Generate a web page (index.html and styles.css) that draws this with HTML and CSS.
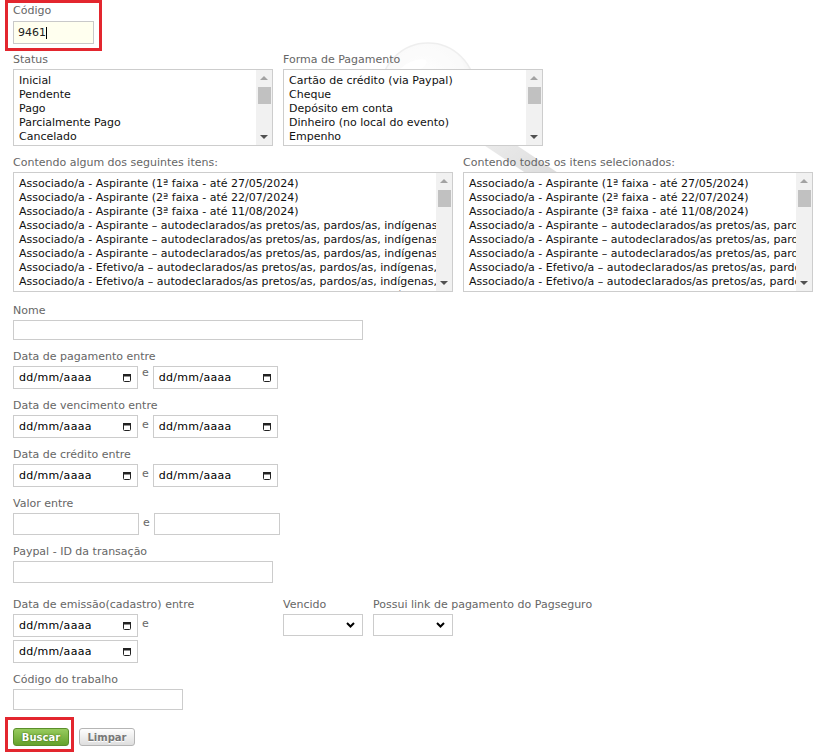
FILE: index.html
```html
<!DOCTYPE html>
<html lang="pt-BR">
<head>
	<meta charset="utf-8">
	<title>Inscrições - filtro</title>
	<link rel="stylesheet" href="styles.css">
</head>
<body>
	<!-- marca d'agua do fundo -->
	<svg class="lens" width="230" height="170" viewBox="0 0 230 170">
		<defs>
			<radialGradient id="glass" cx="45%" cy="40%" r="60%">
				<stop offset="0" stop-color="#ffffff"/>
				<stop offset="0.75" stop-color="#f7f7f7"/>
				<stop offset="1" stop-color="#e6e6e6"/>
			</radialGradient>
			<linearGradient id="cabo" x1="0" y1="0" x2="1" y2="1">
				<stop offset="0" stop-color="#ececec"/>
				<stop offset="1" stop-color="#c4c4c4"/>
			</linearGradient>
		</defs>
		<line x1="85" y1="77" x2="190" y2="147" stroke="url(#cabo)" stroke-width="18" stroke-linecap="round"/>
		<circle cx="58" cy="52" r="47" fill="url(#glass)" stroke="#e4e4e4" stroke-width="1.5"/>
		<ellipse cx="42" cy="30" rx="16" ry="6" fill="#fff" transform="rotate(-25 42 30)"/>
	</svg>

	<form class="filtros">
		<div class="hl hl-cod">
			<label>Código</label>
			<div class="cod-wrap">
				<input class="txt cod" type="text" value="9461">
				<span class="caret"></span>
			</div>
		</div>

		<div class="row row-top">
			<div class="field w260">
				<label>Status</label>
				<div class="list short">
					<div class="opts">
						<div>Inicial</div>
						<div>Pendente</div>
						<div>Pago</div>
						<div>Parcialmente Pago</div>
						<div>Cancelado</div>
						<div>Isento</div>
					</div>
					<div class="sbar"><span class="up"></span><span class="thumb"></span><span class="dn"></span></div>
				</div>
			</div>
			<div class="field w260">
				<label>Forma de Pagamento</label>
				<div class="list short">
					<div class="opts">
						<div>Cartão de crédito (via Paypal)</div>
						<div>Cheque</div>
						<div>Depósito em conta</div>
						<div>Dinheiro (no local do evento)</div>
						<div>Empenho</div>
						<div>Isento/cortesia</div>
					</div>
					<div class="sbar"><span class="up"></span><span class="thumb"></span><span class="dn"></span></div>
				</div>
			</div>
		</div>

		<div class="row row-itens">
			<div class="field w440">
				<label>Contendo algum dos seguintes itens:</label>
				<div class="list tall">
					<div class="opts">
						<div>Associado/a - Aspirante (1ª faixa - até 27/05/2024)</div>
						<div>Associado/a - Aspirante (2ª faixa - até 22/07/2024)</div>
						<div>Associado/a - Aspirante (3ª faixa - até 11/08/2024)</div>
						<div>Associado/a - Aspirante – autodeclarados/as pretos/as, pardos/as, indígenas e quilombolas (1ª faixa)</div>
						<div>Associado/a - Aspirante – autodeclarados/as pretos/as, pardos/as, indígenas e quilombolas (2ª faixa)</div>
						<div>Associado/a - Aspirante – autodeclarados/as pretos/as, pardos/as, indígenas e quilombolas (3ª faixa)</div>
						<div>Associado/a - Efetivo/a – autodeclarados/as pretos/as, pardos/as, indígenas, quilombolas (1ª faixa)</div>
						<div>Associado/a - Efetivo/a – autodeclarados/as pretos/as, pardos/as, indígenas, quilombolas (2ª faixa)</div>
						<div>Associado/a - Efetivo/a – autodeclarados/as pretos/as, pardos/as, indígenas, quilombolas (3ª faixa)</div>
					</div>
					<div class="sbar"><span class="up"></span><span class="thumb"></span><span class="dn"></span></div>
				</div>
			</div>
			<div class="field w350">
				<label>Contendo todos os itens selecionados:</label>
				<div class="list tall">
					<div class="opts">
						<div>Associado/a - Aspirante (1ª faixa - até 27/05/2024)</div>
						<div>Associado/a - Aspirante (2ª faixa - até 22/07/2024)</div>
						<div>Associado/a - Aspirante (3ª faixa - até 11/08/2024)</div>
						<div>Associado/a - Aspirante – autodeclarados/as pretos/as, pardos/as, indígenas e quilombolas (1ª faixa)</div>
						<div>Associado/a - Aspirante – autodeclarados/as pretos/as, pardos/as, indígenas e quilombolas (2ª faixa)</div>
						<div>Associado/a - Aspirante – autodeclarados/as pretos/as, pardos/as, indígenas e quilombolas (3ª faixa)</div>
						<div>Associado/a - Efetivo/a – autodeclarados/as pretos/as, pardos/as, indígenas, quilombolas (1ª faixa)</div>
						<div>Associado/a - Efetivo/a – autodeclarados/as pretos/as, pardos/as, indígenas, quilombolas (2ª faixa)</div>
						<div>Associado/a - Efetivo/a – autodeclarados/as pretos/as, pardos/as, indígenas, quilombolas (3ª faixa)</div>
					</div>
					<div class="sbar"><span class="up"></span><span class="thumb"></span><span class="dn"></span></div>
				</div>
			</div>
		</div>

		<div class="field f-nome">
			<label>Nome</label>
			<input class="txt nome" type="text">
		</div>

		<div class="field">
			<label>Data de pagamento entre</label>
			<div class="pair">
				<div class="date"><span>dd/mm/aaaa</span><svg width="8" height="8" viewBox="0 0 8 8"><rect x="0.5" y="0.5" width="7" height="7" rx="1" fill="none" stroke="#222"/><rect x="0" y="0" width="8" height="2.5" fill="#222"/></svg></div>
				<span class="e e-top">e</span>
				<div class="date"><span>dd/mm/aaaa</span><svg width="8" height="8" viewBox="0 0 8 8"><rect x="0.5" y="0.5" width="7" height="7" rx="1" fill="none" stroke="#222"/><rect x="0" y="0" width="8" height="2.5" fill="#222"/></svg></div>
			</div>
		</div>

		<div class="field">
			<label>Data de vencimento entre</label>
			<div class="pair">
				<div class="date"><span>dd/mm/aaaa</span><svg width="8" height="8" viewBox="0 0 8 8"><rect x="0.5" y="0.5" width="7" height="7" rx="1" fill="none" stroke="#222"/><rect x="0" y="0" width="8" height="2.5" fill="#222"/></svg></div>
				<span class="e">e</span>
				<div class="date"><span>dd/mm/aaaa</span><svg width="8" height="8" viewBox="0 0 8 8"><rect x="0.5" y="0.5" width="7" height="7" rx="1" fill="none" stroke="#222"/><rect x="0" y="0" width="8" height="2.5" fill="#222"/></svg></div>
			</div>
		</div>

		<div class="field">
			<label>Data de crédito entre</label>
			<div class="pair">
				<div class="date"><span>dd/mm/aaaa</span><svg width="8" height="8" viewBox="0 0 8 8"><rect x="0.5" y="0.5" width="7" height="7" rx="1" fill="none" stroke="#222"/><rect x="0" y="0" width="8" height="2.5" fill="#222"/></svg></div>
				<span class="e">e</span>
				<div class="date"><span>dd/mm/aaaa</span><svg width="8" height="8" viewBox="0 0 8 8"><rect x="0.5" y="0.5" width="7" height="7" rx="1" fill="none" stroke="#222"/><rect x="0" y="0" width="8" height="2.5" fill="#222"/></svg></div>
			</div>
		</div>

		<div class="field">
			<label>Valor entre</label>
			<div class="pair">
				<input class="txt valor" type="text">
				<span class="e">e</span>
				<input class="txt valor" type="text">
			</div>
		</div>

		<div class="field">
			<label>Paypal - ID da transação</label>
			<input class="txt paypal" type="text">
		</div>

		<div class="row row-emissao">
			<div class="field w260">
				<label>Data de emissão(cadastro) entre</label>
				<div class="pair wrap">
					<div class="date"><span>dd/mm/aaaa</span><svg width="8" height="8" viewBox="0 0 8 8"><rect x="0.5" y="0.5" width="7" height="7" rx="1" fill="none" stroke="#222"/><rect x="0" y="0" width="8" height="2.5" fill="#222"/></svg></div>
					<span class="e">e</span>
					<div class="date"><span>dd/mm/aaaa</span><svg width="8" height="8" viewBox="0 0 8 8"><rect x="0.5" y="0.5" width="7" height="7" rx="1" fill="none" stroke="#222"/><rect x="0" y="0" width="8" height="2.5" fill="#222"/></svg></div>
				</div>
			</div>
			<div class="field w80">
				<label>Vencido</label>
				<div class="sel">
					<select><option></option><option>Sim</option><option>Não</option></select>
					<svg width="9" height="6" viewBox="0 0 9 6"><path d="M1 1l3.5 3.5L8 1" fill="none" stroke="#000" stroke-width="2"/></svg>
				</div>
			</div>
			<div class="field w80">
				<label>Possui link de pagamento do Pagseguro</label>
				<div class="sel">
					<select><option></option><option>Sim</option><option>Não</option></select>
					<svg width="9" height="6" viewBox="0 0 9 6"><path d="M1 1l3.5 3.5L8 1" fill="none" stroke="#000" stroke-width="2"/></svg>
				</div>
			</div>
		</div>

		<div class="field">
			<label>Código do trabalho</label>
			<input class="txt trab" type="text">
		</div>

		<div class="acoes">
			<div class="hl hl-btn"><button type="submit" class="btn buscar">Buscar</button></div>
			<button type="reset" class="btn limpar">Limpar</button>
		</div>
	</form>
</body>
</html>
```

FILE: styles.css
```css
*{box-sizing:border-box; margin:0; padding:0;}
html,body{height:752px; overflow:hidden;}
body{font-family:"DejaVu Sans", sans-serif; font-size:11px; color:#222; background:#fff; position:relative;}

.lens{position:absolute; left:370px; top:38px; z-index:0; opacity:.6;}

.filtros{position:relative; z-index:1; padding-left:13px;}
label{display:block; color:#666; line-height:14px; margin-bottom:2px; white-space:nowrap;}

.hl{border:3px solid #e3262e; display:inline-block;}
.hl-cod{margin-left:-8px; padding:1px 5px 4px 5px;}
.hl-cod label{margin-bottom:3px;}
.cod-wrap{position:relative;}
.caret{position:absolute; left:33px; top:6px; width:1px; height:12px; background:#000;}

.txt{display:block; border:1px solid #ccc; font:11px "DejaVu Sans", sans-serif; color:#222; padding:0 4px; background:#fff; outline:none;}
.cod{width:81px; height:23px; background:#ffffef; border-color:#c9c9c9;}
.nome{width:350px; height:20px;}
.valor{width:126px; height:22px;}
.paypal{width:260px; height:22px;}
.trab{width:170px; height:21px;}

.row{display:flex; gap:10px; align-items:flex-start;}
.row-top{margin-top:2px;}
.row-itens{margin-top:10px;}
.w260{width:260px;}
.w440{width:440px;}
.w350{width:350px;}
.w80{width:80px;}

.field{margin-top:10px;}
.row .field{margin-top:0;}
.f-nome{margin-top:12px;}
.row-emissao{margin-top:15px;}

/* listas de selecao multipla */
.list{display:flex; border:1px solid #cdcdcd; background:#fff;}
.list.short{height:77px;}
.list.tall{height:120px;}
.opts{flex:1; overflow:hidden; white-space:nowrap; padding:4px 0 0 5px; line-height:14px; color:#111;}
.sbar{width:16px; background:#f1f1f1; display:flex; flex-direction:column; align-items:center;}
.sbar .up{margin-top:6px; border-left:4px solid transparent; border-right:4px solid transparent; border-bottom:4px solid #a3a3a3;}
.sbar .thumb{width:13px; height:17px; background:#c1c1c1; margin-top:7px;}
.sbar .dn{margin-top:auto; margin-bottom:6px; border-left:4px solid transparent; border-right:4px solid transparent; border-top:4px solid #505050;}

/* datas */
.pair{display:flex; align-items:center;}
.pair.wrap{flex-wrap:wrap; row-gap:3px;}
.e{color:#666; margin:-3px 4px 0; line-height:12px;}
.e-top{align-self:flex-start; margin-top:1px;}
.date{display:flex; align-items:center; justify-content:space-between; width:125px; height:23px; border:1px solid #ccc; padding:0 6px 0 5px; font-size:11px; letter-spacing:.3px; color:#000; background:#fff;}
.date svg{display:block;}

/* combos */
.sel{position:relative; width:80px;}
.sel select{appearance:none; -webkit-appearance:none; display:block; width:80px; height:22px; border:1px solid #ccc; background:#fff; font:11px "DejaVu Sans", sans-serif;}
.sel svg{position:absolute; right:8px; top:8px;}

/* botoes */
.acoes{display:flex; align-items:flex-start; margin-top:7px;}
.hl-btn{margin-left:-8px; padding:8px 2px 3px 5px;}
.btn{display:block; width:56px; height:18px; border-radius:3px; font:bold 10px "DejaVu Sans", sans-serif; cursor:pointer;}
.buscar{background:linear-gradient(#97cb5e, #65a22c); border:1px solid #5a8f2b; color:#fff; text-shadow:0 0 2px #2f5a0c;}
.limpar{margin:11px 0 0 5px; background:linear-gradient(#fefefe, #dedede); border:1px solid #b5b5b5; color:#777; text-shadow:0 1px 0 #fff;}
```
